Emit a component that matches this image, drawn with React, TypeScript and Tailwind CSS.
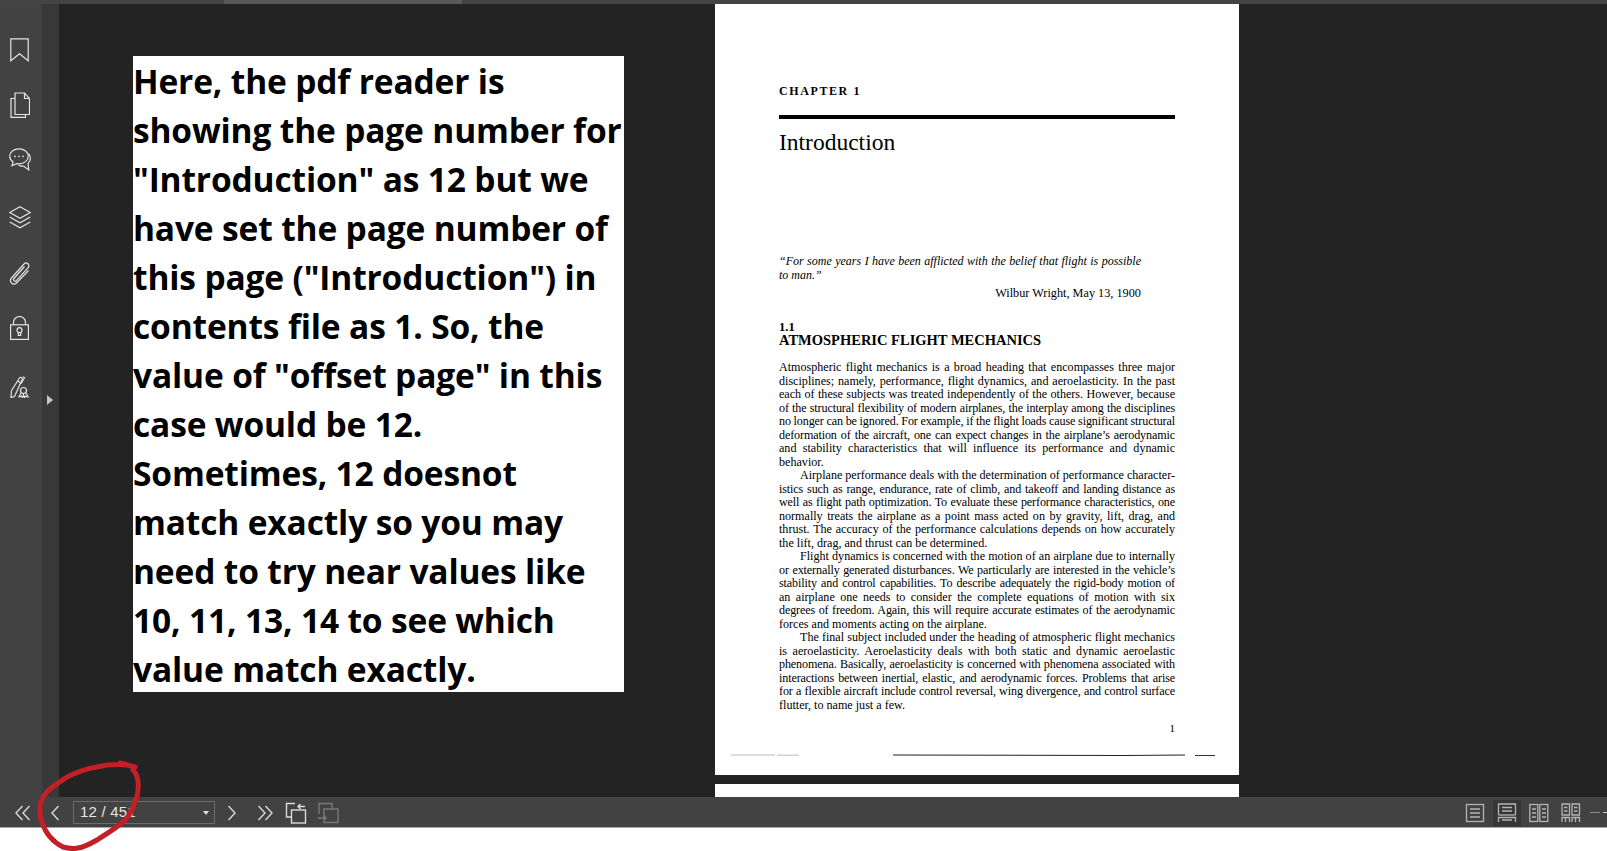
import React from "react";

const P1 = [
  "Atmospheric flight mechanics is a broad heading that encompasses three major",
  "disciplines; namely, performance, flight dynamics, and aeroelasticity. In the past",
  "each of these subjects was treated independently of the others. However, because",
  "~of the structural flexibility of modern airplanes, the interplay among the disciplines",
  "~no longer can be ignored. For example, if the flight loads cause significant structural",
  "~deformation of the aircraft, one can expect changes in the airplane\u2019s aerodynamic",
  "and stability characteristics that will influence its performance and dynamic",
  "behavior.|",
  ">Airplane performance deals with the determination of performance character-",
  "~istics such as range, endurance, rate of climb, and takeoff and landing distance as",
  "~well as flight path optimization. To evaluate these performance characteristics, one",
  "normally treats the airplane as a point mass acted on by gravity, lift, drag, and",
  "thrust. The accuracy of the performance calculations depends on how accurately",
  "the lift, drag, and thrust can be determined.|",
  ">Flight dynamics is concerned with the motion of an airplane due to internally",
  "~or externally generated disturbances. We particularly are interested in the vehicle\u2019s",
  "~stability and control capabilities. To describe adequately the rigid-body motion of",
  "an airplane one needs to consider the complete equations of motion with six",
  "~degrees of freedom. Again, this will require accurate estimates of the aerodynamic",
  "forces and moments acting on the airplane.|",
  ">The final subject included under the heading of atmospheric flight mechanics",
  "is aeroelasticity. Aeroelasticity deals with both static and dynamic aeroelastic",
  "~phenomena. Basically, aeroelasticity is concerned with phenomena associated with",
  "~interactions between inertial, elastic, and aerodynamic forces. Problems that arise",
  "~for a flexible aircraft include control reversal, wing divergence, and control surface",
  "flutter, to name just a few.|",
];

const NOTE = [
  "Here, the pdf reader is",
  "showing the page number for",
  "\"Introduction\" as 12 but we",
  "have set the page number of",
  "this page (\"Introduction\") in",
  "contents file as 1. So, the",
  "value of \"offset page\" in this",
  "case would be 12.",
  "Sometimes, 12 doesnot",
  "match exactly so you may",
  "need to try near values like",
  "10, 11, 13, 14 to see which",
  "value match exactly.",
];

function Ico({ children, w = 24, h = 24, cls = "", sw = 1.2 }: { children: React.ReactNode; w?: number; h?: number; cls?: string; sw?: number }) {
  return (
    <svg width={w} height={h} viewBox={`0 0 ${w} ${h}`} fill="none" stroke="currentColor" strokeWidth={sw} className={`block ${cls}`}>
      {children}
    </svg>
  );
}

function Sidebar() {
  return (
    <div className="w-[42px] bg-[#424242] flex flex-col items-center pt-[34px] pr-[3px] text-[#e4e4e4]">
      <div className="h-[24px] mb-[30px]">
        <Ico w={19} h={24}><path d="M.8.8h17.400v22L9.500 15.800.8 22.800z" /></Ico>
      </div>
      <div className="h-[26px] mb-[30px]">
        <Ico w={20} h={26}><path d="M15.500 22.800v2.600H1V6.500h4" /><path d="M5 1h9.500l5 5.500v16H5z" /><path d="M14.500 1v5.500h5" /></Ico>
      </div>
      <div className="h-[23px] mb-[35px]">
        <Ico w={22} h={23}><path d="M10 .8C4.800.8.7 4 .7 8.200c0 2.400 1.300 4.300 3.300 5.600L3 17.700l4.800-2.100c.7.100 1.500.2 2.200.2 5.200 0 9.300-3.300 9.300-7.500S15.200.8 10 .8z" /><path d="M19.500 5.500c1.200 1.200 1.900 2.800 1.900 4.700 0 2.100-1 3.800-2.300 4.900l.6 6.800-5.200-3.900c-2 .2-3.500-.1-5-.8" /><circle cx="6" cy="8.300" r=".9" fill="currentColor" stroke="none" /><circle cx="10" cy="8.300" r=".9" fill="currentColor" stroke="none" /><circle cx="14" cy="8.300" r=".9" fill="currentColor" stroke="none" /></Ico>
      </div>
      <div className="h-[23px] mb-[32px]">
        <Ico w={22} h={23}><path d="M11 .8l10.300 5.700L11 12.200.7 6.500z" /><path d="M.7 11l10.300 5.700L21.300 11" /><path d="M.7 16l10.300 5.700L21.300 16" /></Ico>
      </div>
      <div className="h-[24px] mb-[31px]">
        <Ico w={21} h={24}><path d="M15.500 5.500L5 17.500c-1.500 1.800.9 3.800 2.400 2.200L19 6.800c2.300-2.800-1-6.800-4-3.800L2.500 17c-3 3.700 1.600 8.500 5 5L19.500 9.500" /></Ico>
      </div>
      <div className="h-[24px] mb-[36px]">
        <Ico w={19} h={24}><path d="M3.500 8.500V6.500a6 6 0 0 1 12 0v2" /><rect x=".6" y="8.800" width="17.800" height="14.600" /><circle cx="9.500" cy="14.200" r="2.500" /><path d="M8.300 16.500h2.400v2.800H8.300z" /></Ico>
      </div>
      <div className="h-[22px]">
        <Ico w={19} h={22}><path d="M1.500 14.500L9.500 2c1-1.500 3.400-.3 2.700 1.500L4.500 20.500l-3.500 1z" /><path d="M7.500 5l3.500 2" /><path d="M13 .8l1.500 1-3.500 6" /><circle cx="13.500" cy="14.500" r="3" /><path d="M11 17l-2 3.800 2.500-.6 1 1.500 1-3 1 3 1-1.500 2.500.6-2-3.800" /></Ico>
      </div>
    </div>
  );
}

function Rail() {
  return (
    <div className="w-[17px] bg-[#383838] relative">
      <div className="absolute left-[5px] top-[391px] w-0 h-0 border-y-[5.500px] border-y-transparent border-l-[6px] border-l-[#c4c4c4]" />
    </div>
  );
}

function Note() {
  return (
    <div className="w-[491px] h-[636px] bg-white text-black mt-[52px] ml-[74px] shrink-0 font-['Open_Sans',sans-serif] font-bold text-[33.500px] leading-[49px] tracking-[-0.150px] whitespace-nowrap overflow-hidden pt-[1px]">
      {NOTE.map((l) => (
        <div key={l}>{l}</div>
      ))}
    </div>
  );
}

function JLine({ text }: { text: string }) {
  const indent = text.startsWith(">");
  const last = text.endsWith("|");
  const tight = text.startsWith("~");
  const t = text.replace(">", "").replace("|", "").replace("~", "");
  return (
    <div
      className={`h-[13.500px] ${last ? "text-left" : "[text-align:justify] [text-align-last:justify]"} ${
        tight ? "tracking-[-0.120px] [word-spacing:-1.400px]" : last ? "" : "[word-spacing:-1px]"
      } ${indent ? "pl-[21px]" : ""}`}
    >
      {t}
    </div>
  );
}

function Page() {
  return (
    <div className="w-[524px] h-[771px] bg-white text-black font-['Liberation_Serif',serif] pl-[64px] pr-[64px] pt-[80px] shrink-0">
      <div className="font-bold text-[12px] tracking-[1.600px] leading-[14px]">CHAPTER 1</div>
      <div className="h-[4px] bg-black mt-[17px]" />
      <div className="text-[23.500px] leading-[26px] mt-[9.500px]">Introduction</div>
      <div className="mt-[100.500px] pr-[34px] text-[12px] leading-[13.500px] italic">
        <div className="[text-align:justify] [text-align-last:justify]">{"\u201cFor some years I have been afflicted with the belief that flight is possible"}</div>
        <div>{"to man.\u201d"}</div>
      </div>
      <div className="pr-[34px] text-right text-[12.250px] leading-[13.500px] mt-[5px]">Wilbur Wright, May 13, 1900</div>
      <div className="font-bold text-[12.500px] leading-[14px] mt-[19.500px]">1.1</div>
      <div className="font-bold text-[14.500px] leading-[13px]">ATMOSPHERIC FLIGHT MECHANICS</div>
      <div className="text-[12.100px] leading-[13.500px] mt-[14px]">
        {P1.map((l) => (
          <JLine key={l} text={l} />
        ))}
      </div>
      <div className="text-right text-[11px] leading-[13px] mt-[10px]">1</div>
      <svg width="524" height="6" viewBox="0 0 524 6" className="block -ml-[64px] mt-[16.500px]">
        <path d="M16 3h44M62 3.200h22" stroke="#a8a8a8" strokeWidth=".8" />
        <path d="M178 3 C 260 3.200 340 3.800 410 3.500 C 430 3.400 450 3.200 470 3" stroke="#222" strokeWidth="1.200" fill="none" />
        <path d="M480 3.500h20" stroke="#333" strokeWidth="1" />
      </svg>
    </div>
  );
}

function Viewer() {
  return (
    <div className="flex-1 bg-[#232323] flex overflow-hidden min-w-0">
      <Note />
      <div className="ml-[91px] shrink-0 flex flex-col gap-[9px]">
        <Page />
        <div className="w-[524px] h-[40px] bg-white shrink-0" />
      </div>
    </div>
  );
}

function LayoutIcon({ kind, active }: { kind: number; active?: boolean }) {
  return (
    <div className={`w-[28px] h-[26px] flex items-center justify-center overflow-hidden ${active ? "bg-[#363636]" : ""}`}>
      <svg width="20" height="20" viewBox="0 0 20 20" fill="none" stroke="#b4b4b4" strokeWidth="1.300">
        {kind === 0 && (<><rect x="1.500" y="1.500" width="17" height="17" /><path d="M5 6h10M5 10h10M5 14h10" /></>)}
        {kind === 1 && (<><path d="M1.500 12V1h17v11" /><path d="M1.500 12h17" /><path d="M5 4.500h10M5 8h10" /><path d="M1.500 19v-4.500h17V19M5 17h10" /></>)}
        {kind === 2 && (<><rect x=".8" y="1.500" width="8" height="17" /><rect x="10.800" y="1.500" width="8" height="17" /><path d="M3 6h4M3 10h4M3 14h4M13 6h4M13 10h4M13 14h4" /></>)}
        {kind === 3 && (<><path d="M1 12V1h7.500v11zM11 12V1h7.500v11z" /><path d="M3 4.500h3.500M3 8h3.500M13 4.500h3.500M13 8h3.500" /><path d="M1 19v-4.500h7.500V19M11 19v-4.500h7.500V19M4.500 15v4M14.500 15v4" /></>)}
      </svg>
    </div>
  );
}

function Toolbar() {
  const chev = "text-[#d8d8d8]";
  return (
    <div className="h-[31px] bg-[#424242] border-b border-b-[#a8a8a8] flex items-center font-['Liberation_Sans',sans-serif] relative shrink-0 overflow-hidden pt-[1px]">
      <div className="ml-[14px]">
        <Ico w={18} h={16} cls={chev} sw={1.4}><path d="M8.500 1L2 8l6.500 7M15.500 1L9 8l6.500 7" /></Ico>
      </div>
      <div className="ml-[17px]">
        <Ico w={12} h={16} cls={chev} sw={1.4}><path d="M9.500 1L3 8l6.500 7" /></Ico>
      </div>
      <div className="ml-[12px] w-[142px] h-[23px] border border-[#6c6c6c] flex items-center pl-[6px] pr-[5px] text-[#e6e6e6] text-[15px] justify-between">
        <span className="tracking-[.2px]">12 / 451</span>
        <span className="w-0 h-0 border-x-[3.500px] border-x-transparent border-t-[4px] border-t-[#e0e0e0]" />
      </div>
      <div className="ml-[11px]">
        <Ico w={12} h={16} cls={chev} sw={1.4}><path d="M2.500 1L9 8l-6.500 7" /></Ico>
      </div>
      <div className="ml-[18px]">
        <Ico w={18} h={16} cls={chev} sw={1.4}><path d="M2.500 1L9 8l-6.500 7M9.500 1L16 8l-6.500 7" /></Ico>
      </div>
      <div className="ml-[11px]">
        <Ico w={22} h={22} cls="text-[#dcdcdc]" sw={1.4}><path d="M7 15H1.500V1.500H10" /><rect x="6.500" y="8" width="14" height="13" /><path d="M20 4.500h-7M15.500 2l-2.500 2.500L15.500 7" /></Ico>
      </div>
      <div className="ml-[10px]">
        <Ico w={22} h={22} cls="text-[#787878]" sw={1.4}><path d="M2 12V1.500h13V7" /><rect x="7" y="7" width="14" height="13.500" /><path d="M1 16h8M6.500 13.500L9 16l-2.500 2.500" /></Ico>
      </div>
      <div className="ml-auto flex items-center gap-[4px]">
        <LayoutIcon kind={0} />
        <LayoutIcon kind={1} active />
        <LayoutIcon kind={2} />
        <LayoutIcon kind={3} />
        <div className="w-[10px] h-[1.500px] bg-[#8a8a8a] ml-[1px]" />
        <div className="w-[4px] h-[1.500px] bg-[#c4c4c4] -ml-[1px]" />
      </div>
    </div>
  );
}

function RedCircle() {
  return (
    <svg className="absolute left-0 top-0 pointer-events-none" width="160" height="851" viewBox="0 0 160 851" fill="none">
      <path
        d="M135 767 L120 763 M128 765 C 115 764 105 765 97 767 C 83 769 75 773 67 777 C 55 785 47 790 43 797 C 39 805 39 815 42 822 C 46 835 55 843 63 847 C 70 849 74 849 78 848 C 85 847 90 844 97 840 C 108 833 116 828 123 822 C 129 817 131 812 133 807 C 136 800 138 795 138 790 C 139 780 136 773 133 770"
        stroke="#c21f26"
        strokeWidth="5"
        strokeLinecap="round"
      />
    </svg>
  );
}

export default function App() {
  return (
    <div className="w-[1607px] h-[851px] bg-white flex flex-col overflow-hidden relative">
      <div className="h-[4px] bg-[#444444] shrink-0 flex">
        <div className="w-[224px]" />
        <div className="w-[238px] bg-[#585858]" />
      </div>
      <div className="h-[793px] flex shrink-0 overflow-hidden">
        <Sidebar />
        <Rail />
        <Viewer />
      </div>
      <Toolbar />
      <div className="flex-1 bg-white" />
      <RedCircle />
    </div>
  );
}
